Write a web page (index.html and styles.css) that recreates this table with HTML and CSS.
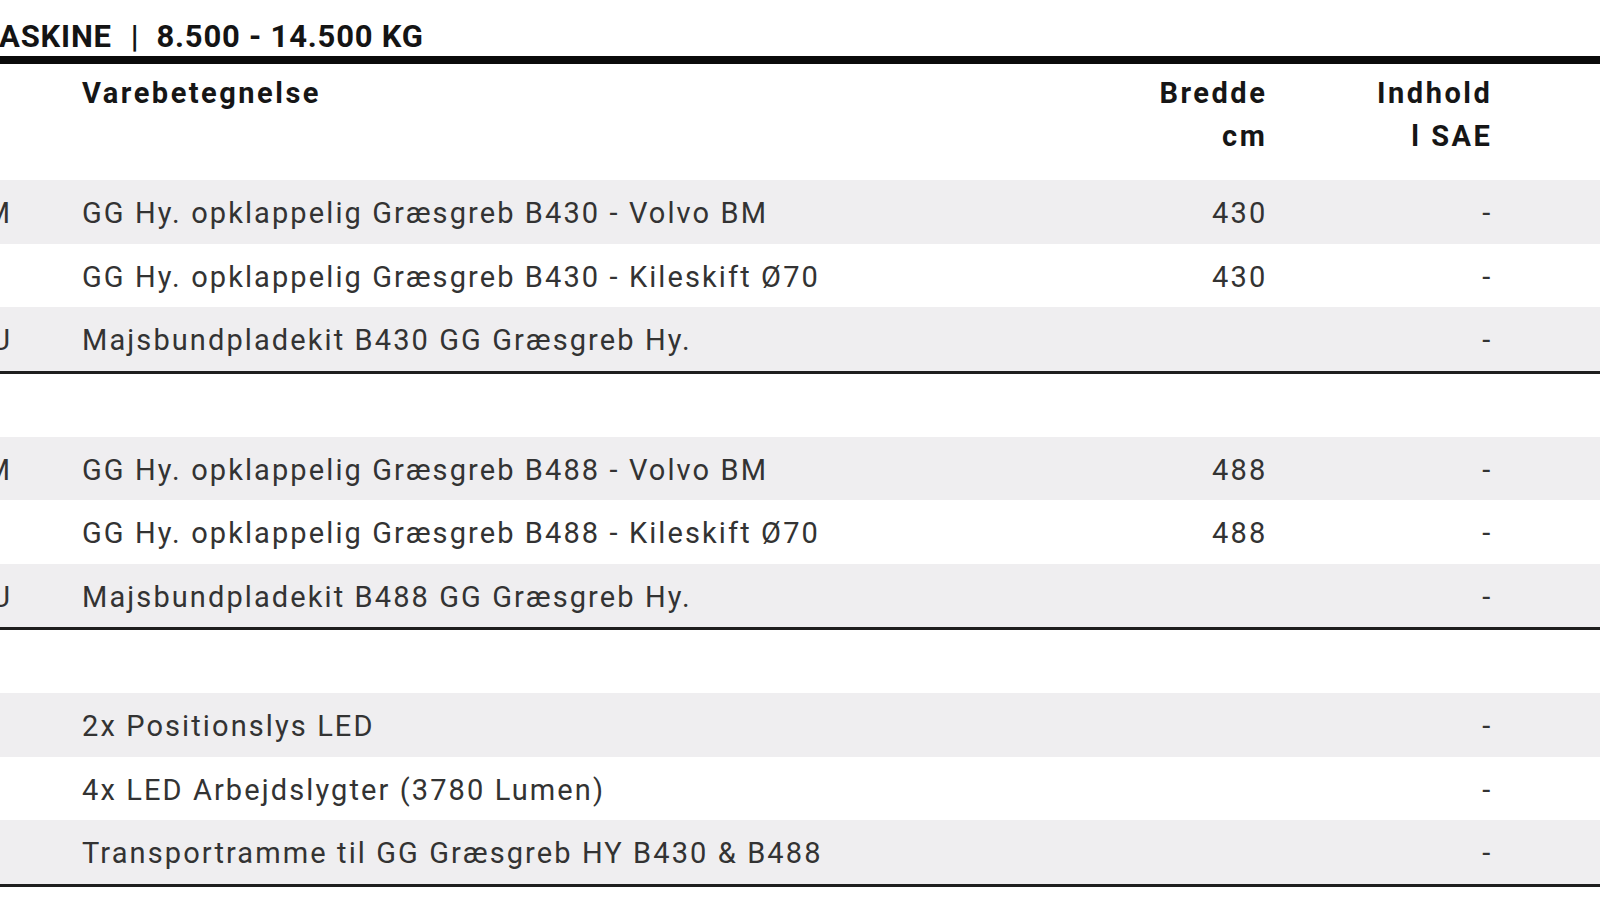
FILE: index.html
```html
<!DOCTYPE html>
<html lang="da">
<head>
<meta charset="utf-8">
<title>Græsgreb</title>
<link rel="stylesheet" href="styles.css">
</head>
<body>
<div class="page">
  <div class="title"><span class="title-cut"><span>HJULLÆSSEM</span></span><span class="title-text">ASKINE</span><span class="title-sep">|</span><span class="title-text">8.500 - 14.500 KG</span></div>
  <div class="table">
    <div class="row head">
      <div class="code"></div>
      <div class="desc">Varebetegnelse</div>
      <div class="num">Bredde<br>cm</div>
      <div class="num">Indhold<br>l SAE</div>
      <div class="rest"></div>
    </div>

    <div class="row gray">
      <div class="code"><span>GG430BM</span></div>
      <div class="desc">GG Hy. opklappelig Græsgreb B430 - Volvo BM</div>
      <div class="num">430</div>
      <div class="num">-</div>
      <div class="rest"></div>
    </div>
    <div class="row">
      <div class="code"><span></span></div>
      <div class="desc">GG Hy. opklappelig Græsgreb B430 - Kileskift Ø70</div>
      <div class="num">430</div>
      <div class="num">-</div>
      <div class="rest"></div>
    </div>
    <div class="row gray last">
      <div class="code"><span>GG430MU</span></div>
      <div class="desc">Majsbundpladekit B430 GG Græsgreb Hy.</div>
      <div class="num"></div>
      <div class="num">-</div>
      <div class="rest"></div>
    </div>

    <div class="spacer"></div>

    <div class="row gray">
      <div class="code"><span>GG488BM</span></div>
      <div class="desc">GG Hy. opklappelig Græsgreb B488 - Volvo BM</div>
      <div class="num">488</div>
      <div class="num">-</div>
      <div class="rest"></div>
    </div>
    <div class="row">
      <div class="code"><span></span></div>
      <div class="desc">GG Hy. opklappelig Græsgreb B488 - Kileskift Ø70</div>
      <div class="num">488</div>
      <div class="num">-</div>
      <div class="rest"></div>
    </div>
    <div class="row gray last">
      <div class="code"><span>GG488MU</span></div>
      <div class="desc">Majsbundpladekit B488 GG Græsgreb Hy.</div>
      <div class="num"></div>
      <div class="num">-</div>
      <div class="rest"></div>
    </div>

    <div class="spacer"></div>

    <div class="row gray">
      <div class="code"><span></span></div>
      <div class="desc">2x Positionslys LED</div>
      <div class="num"></div>
      <div class="num">-</div>
      <div class="rest"></div>
    </div>
    <div class="row">
      <div class="code"><span></span></div>
      <div class="desc">4x LED Arbejdslygter (3780 Lumen)</div>
      <div class="num"></div>
      <div class="num">-</div>
      <div class="rest"></div>
    </div>
    <div class="row gray last">
      <div class="code"><span></span></div>
      <div class="desc">Transportramme til GG Græsgreb HY B430 &amp; B488</div>
      <div class="num"></div>
      <div class="num">-</div>
      <div class="rest"></div>
    </div>
  </div>
</div>
</body>
</html>
```

FILE: styles.css
```css
html, body {
  margin: 0;
  padding: 0;
  background: #ffffff;
}

.page {
  width: 1600px;
  overflow: hidden;
  font-family: Roboto, "Liberation Sans", sans-serif;
  color: #333333;
}

.title {
  display: flex;
  align-items: baseline;
  height: 56px;
  box-sizing: border-box;
  padding-top: 19px;
  font-size: 31px;
  line-height: 36px;
  font-weight: 700;
  letter-spacing: 0.8px;
  color: #141414;
  white-space: nowrap;
}

.title-cut {
  display: flex;
  justify-content: flex-end;
  width: 0;
  overflow: hidden;
  flex: none;
  margin-left: -1px;
}

.title-cut span,
.title-text {
  flex: none;
}

.title-sep {
  flex: none;
  margin: 0 17px 0 19px;
}

.table {
  border-top: 8px solid #0a0a0a;
}

.row {
  display: grid;
  grid-template-columns: 82px 1023px 160px 225px 110px;
  height: 63.5px;
  box-sizing: border-box;
  padding-top: 3px;
  font-size: 29px;
  line-height: 60px;
  letter-spacing: 2.1px;
  white-space: nowrap;
}

.row.gray {
  background: #efeef0;
}

.row.last {
  height: 66.5px;
  border-bottom: 3px solid #1e1e1e;
}

.row.head {
  height: 116px;
  padding-top: 8px;
  line-height: 43px;
  font-weight: 700;
  letter-spacing: 2.5px;
  color: #161616;
}

.code {
  display: flex;
  justify-content: flex-end;
  overflow: hidden;
  padding-right: 72px;
  letter-spacing: 0;
}

.code span {
  flex: none;
}

.desc {
  text-align: left;
}

.num {
  text-align: right;
  margin-right: -2.3px;
}

.spacer {
  height: 63px;
}
```
